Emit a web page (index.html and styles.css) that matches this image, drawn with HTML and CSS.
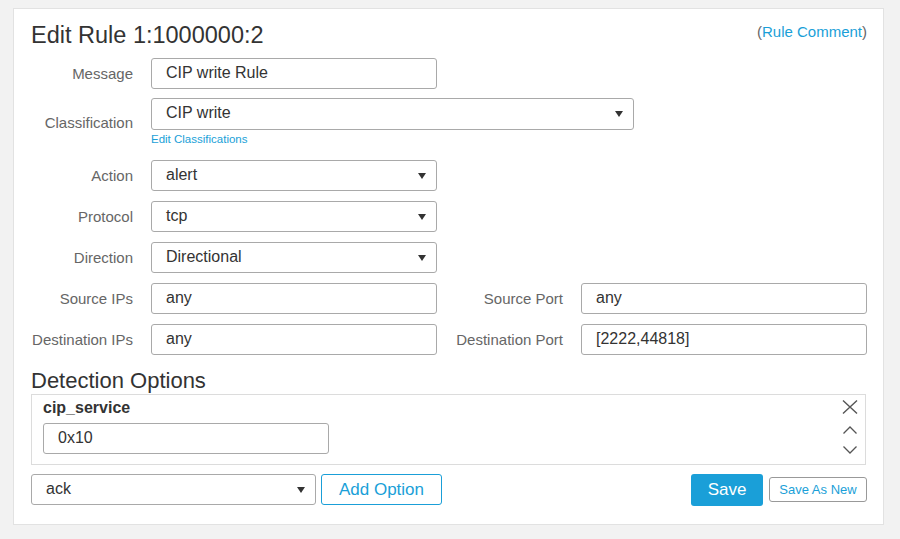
FILE: index.html
```html
<!DOCTYPE html>
<html lang="en">
<head>
<meta charset="utf-8">
<title>Edit Rule</title>
<link rel="stylesheet" href="styles.css">
</head>
<body>
<div class="card">
  <div class="header">
    <h1 class="title">Edit Rule 1:1000000:2</h1>
    <div class="comment">(<a class="link">Rule Comment</a>)</div>
  </div>

  <div class="form">
    <div class="row">
      <span class="lbl">Message</span>
      <div class="field w286">CIP write Rule</div>
    </div>
    <div class="row row-class">
      <span class="lbl">Classification</span>
      <div class="stack">
        <div class="field select w483 tall"><span>CIP write</span><span class="caret"></span></div>
        <a class="sublink">Edit Classifications</a>
      </div>
    </div>
    <div class="row">
      <span class="lbl">Action</span>
      <div class="field select w286"><span>alert</span><span class="caret"></span></div>
    </div>
    <div class="row">
      <span class="lbl">Protocol</span>
      <div class="field select w286"><span>tcp</span><span class="caret"></span></div>
    </div>
    <div class="row">
      <span class="lbl">Direction</span>
      <div class="field select w286"><span>Directional</span><span class="caret"></span></div>
    </div>
    <div class="row">
      <span class="lbl">Source IPs</span>
      <div class="field w286">any</div>
      <span class="lbl lbl-r">Source Port</span>
      <div class="field w286">any</div>
    </div>
    <div class="row">
      <span class="lbl">Destination IPs</span>
      <div class="field w286">any</div>
      <span class="lbl lbl-r">Destination Port</span>
      <div class="field w286">[2222,44818]</div>
    </div>
  </div>

  <h2 class="section">Detection Options</h2>
  <div class="optbox">
    <div class="opt-main">
      <div class="opt-name">cip_service</div>
      <div class="field w286">0x10</div>
    </div>
    <div class="opt-tools">
      <svg class="ico-x" width="16" height="16" viewBox="0 0 16 16"><path d="M1 1.5 L15 14.5 M15 1.5 L1 14.5" fill="none" stroke="#555" stroke-width="1.4"/></svg>
      <svg class="ico-chev" width="16" height="10" viewBox="0 0 16 10"><polyline points="1.5,8.5 8,2 14.5,8.5" fill="none" stroke="#555" stroke-width="1.3"/></svg>
      <svg class="ico-chev" width="16" height="10" viewBox="0 0 16 10"><polyline points="1.5,1.5 8,8 14.5,1.5" fill="none" stroke="#555" stroke-width="1.3"/></svg>
    </div>
  </div>

  <div class="actions">
    <div class="field select w285"><span>ack</span><span class="caret"></span></div>
    <button class="btn-outline">Add Option</button>
    <span class="spacer"></span>
    <button class="btn-primary">Save</button>
    <button class="btn-small">Save As New</button>
  </div>
</div>
</body>
</html>
```

FILE: styles.css
```css
* { box-sizing: border-box; }

body {
  margin: 0;
  background: #f2f2f2;
  font-family: "Liberation Sans", Arial, sans-serif;
  color: #333;
}

.card {
  margin: 8px 16px 0 13px;
  height: 517px;
  background: #fff;
  border: 1px solid #e2e2e2;
  padding: 11px 16px 0 17px;
}

.header {
  display: flex;
  justify-content: space-between;
  align-items: flex-start;
  height: 30px;
}

.title {
  margin: 0;
  font-size: 23.5px;
  line-height: 30px;
  font-weight: normal;
  color: #333;
}

.comment {
  margin-top: 3px;
  font-size: 15px;
  line-height: 18px;
  color: #666;
}

.link { color: #1a9fd8; }

.form {
  display: flex;
  flex-direction: column;
  gap: 10px;
  margin-top: 8px;
}

.row {
  display: flex;
  align-items: center;
}

.row-class {
  margin-top: -1px;
  margin-bottom: 4px;
}

.lbl {
  width: 102px;
  margin-right: 18px;
  text-align: right;
  font-size: 15px;
  color: #666;
  white-space: nowrap;
}

.lbl-r { width: 126px; }

.stack {
  display: flex;
  flex-direction: column;
}

.field {
  height: 31px;
  border: 1px solid #a9a9a9;
  border-radius: 3px;
  padding: 0 14px 2px 14px;
  display: flex;
  align-items: center;
  font-size: 16px;
  color: #333;
  background: #fff;
}

.tall { height: 32px; }

.select {
  justify-content: space-between;
  padding-right: 10px;
}

.caret {
  width: 0;
  height: 0;
  border-left: 4.5px solid transparent;
  border-right: 4.5px solid transparent;
  border-top: 6px solid #333;
  margin-top: 2px;
}

.w286 { width: 286px; }
.w285 { width: 285px; }
.w483 { width: 483px; }

.sublink {
  margin-top: 2px;
  font-size: 11.5px;
  line-height: 14px;
  color: #1a9fd8;
}

.section {
  margin: 13px 0 0 0;
  font-size: 22px;
  line-height: 26px;
  font-weight: normal;
  color: #333;
}

.optbox {
  display: flex;
  justify-content: space-between;
  margin-right: 1px;
  border: 1px solid #dcdcdc;
  padding: 3px 7px 9px 11px;
}

.opt-name {
  font-size: 16px;
  font-weight: bold;
  line-height: 20px;
  color: #333;
  margin-bottom: 5px;
}

.opt-tools {
  display: flex;
  flex-direction: column;
  padding-top: 1px;
}

.ico-x, .ico-chev { display: block; }
.ico-chev { margin-top: 10px; }

.actions {
  display: flex;
  align-items: flex-start;
  margin-top: 9px;
}

.spacer { flex: 1; }

button {
  font-family: "Liberation Sans", Arial, sans-serif;
  cursor: pointer;
  padding: 0;
}

.btn-outline {
  margin-left: 5px;
  width: 121px;
  height: 31px;
  border: 1px solid #1a9fd8;
  border-radius: 3px;
  background: #fff;
  color: #1a9fd8;
  font-size: 17px;
}

.btn-primary {
  width: 72px;
  height: 32px;
  border: none;
  border-radius: 3px;
  background: #1a9fd8;
  color: #fff;
  font-size: 17px;
}

.btn-small {
  margin-left: 6px;
  margin-top: 3px;
  width: 98px;
  height: 25px;
  border: 1px solid #999;
  border-radius: 3px;
  background: #fff;
  color: #1a9fd8;
  font-size: 13px;
}
```
